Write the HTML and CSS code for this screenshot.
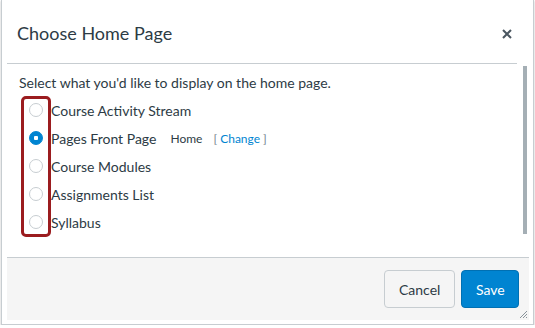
FILE: index.html
```html
<!DOCTYPE html>
<html lang="en">
<head>
    <meta charset="UTF-8">
    <meta name="viewport" content="width=device-width,initial-scale=1.0">
    <title>Choose Home Page</title>
    <link rel="stylesheet" href="styles.css">
</head>
<body>
    <div class="dialog">
        <div class="dialog-header">
            <h1 class="dialog-title">Choose Home Page</h1>
            <svg class="close-btn" width="10" height="10" viewBox="0 0 10 10">
                <path d="M1 1 L9 9 M9 1 L1 9" stroke="#4a5660" stroke-width="2"/>
            </svg>
        </div>

        <div class="dialog-body">
            <div class="body-content">
                <p class="intro">Select what you'd like to display on the home page.</p>
                <ul class="options">
                    <li class="option"><span class="radio"></span>Course Activity Stream</li>
                    <li class="option"><span class="radio checked"></span>Pages Front Page
                        <span class="page-name">Home</span>
                        <span class="change-link">[ <a href="#">Change</a> ]</span>
                    </li>
                    <li class="option"><span class="radio"></span>Course Modules</li>
                    <li class="option"><span class="radio"></span>Assignments List</li>
                    <li class="option"><span class="radio"></span>Syllabus</li>
                </ul>
                <div class="highlight-box"></div>
            </div>
            <div class="scrollbar"><div class="scroll-thumb"></div></div>
        </div>

        <div class="dialog-footer">
            <button class="btn btn-cancel">Cancel</button>
            <button class="btn btn-save">Save</button>
            <svg class="grip" width="9" height="9" viewBox="0 0 9 9">
                <path d="M1 8 L8 1 M4 8 L8 4 M7 8 L8 7" stroke="#8a949b" stroke-width="1"/>
            </svg>
        </div>
    </div>
</body>
</html>
```

FILE: styles.css
```css
* {
    box-sizing: border-box;
}
body {
    margin: 0;
    background-color: #fff;
    font-family: 'Lato', 'Open Sans', sans-serif;
    color: #2d3b45;
}
.dialog {
    width: 533px;
    height: 325px;
    margin-left: 1px;
    padding: 0 4px 4px 5px;
    border: 1px solid #c7cdd1;
    border-top: none;
    box-shadow: 0 1px 2px rgba(0,0,0,0.25);
    display: flex;
    flex-direction: column;
}
.dialog-header {
    height: 64px;
    margin-right: 12px;
    padding: 0 5px 0 10px;
    border-bottom: 1px solid #c7cdd1;
    display: flex;
    align-items: center;
    justify-content: space-between;
}
.dialog-title {
    margin: 0;
    font-size: 18px;
    font-weight: 400;
    padding-top: 2px;
}
.close-btn {
    margin-top: 4px;
}
.dialog-body {
    flex: 1;
    display: flex;
}
.body-content {
    flex: 1;
    position: relative;
    padding: 9px 0 0 12px;
}
.intro {
    margin: 0 0 3px;
    font-size: 14px;
    line-height: 20px;
}
.options {
    list-style: none;
    margin: 0;
    padding: 0 0 0 10px;
}
.option {
    height: 28px;
    display: flex;
    align-items: center;
    font-size: 14px;
}
.radio {
    width: 14px;
    height: 14px;
    margin-right: 8px;
    border: 1px solid #c7cdd1;
    border-radius: 50%;
    background-color: #fff;
}
.radio.checked {
    border-color: #0084d1;
    background: radial-gradient(circle, #fff 0 2px, #0084d1 2.5px);
}
.page-name {
    margin-left: 14px;
    font-size: 12px;
}
.change-link {
    margin-left: 11px;
    font-size: 12px;
    color: #73818c;
}
.change-link a {
    color: #0084d1;
    text-decoration: none;
}
.highlight-box {
    position: absolute;
    left: 14px;
    top: 32px;
    width: 30px;
    height: 141px;
    border: 3px solid #9b1c1f;
    border-radius: 5px;
}
.scrollbar {
    width: 11px;
    padding: 2px 2px 0 5px;
}
.scroll-thumb {
    height: 168px;
    background-color: #a5afb5;
}
.dialog-footer {
    height: 63px;
    position: relative;
    background-color: #f5f5f5;
    border-top: 1px solid #c7cdd1;
    display: flex;
    align-items: center;
    justify-content: flex-end;
    gap: 6px;
    padding: 0 10px 0 0;
}
.btn {
    height: 38px;
    font-family: inherit;
    font-size: 14px;
    border-radius: 4px;
    padding: 0 14px;
}
.btn-cancel {
    width: 71px;
    background-color: #f5f5f5;
    border: 1px solid #c7cdd1;
    color: #2d3b45;
}
.btn-save {
    width: 58px;
    background-color: #0084d1;
    border: 1px solid #0070b3;
    color: #fff;
}
.grip {
    position: absolute;
    right: 1px;
    bottom: 1px;
}
```
